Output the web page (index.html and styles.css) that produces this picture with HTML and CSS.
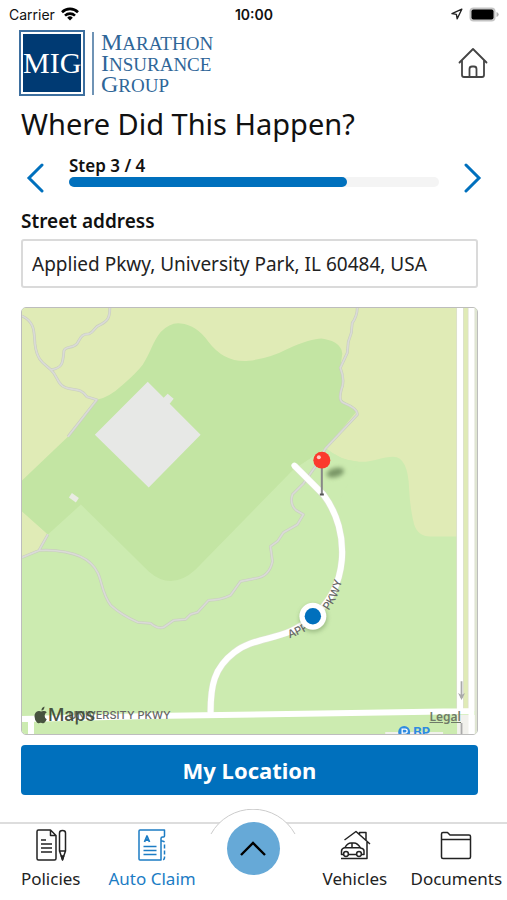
FILE: index.html
```
<!DOCTYPE html>
<html lang="en">
<head>
    <meta charset="UTF-8">
    <meta name="viewport" content="width=device-width, initial-scale=1.0">
    <title>Where Did This Happen?</title>
    <link rel="stylesheet" href="styles.css">
</head>
<body>
    <div class="status-bar">
        <div class="status-left">
            <span>Carrier</span>
            <svg width="18" height="14" viewBox="0 0 18 14" fill="none" stroke="#000" stroke-width="2.6">
                <path d="M1 5.2a11.4 11.4 0 0 1 16 0"/>
                <path d="M4 8.6a7.2 7.2 0 0 1 10 0"/>
                <path d="M9 13.5 6.2 10.7a4 4 0 0 1 5.6 0z" fill="#000" stroke="none"/>
            </svg>
        </div>
        <span class="status-time">10:00</span>
        <div class="status-right">
            <svg width="12" height="12" viewBox="0 0 12 12" fill="none" stroke="#222" stroke-width="1.4" stroke-linejoin="round">
                <path d="M10.8 1.2 1 5.6l4.4.8.8 4.4z"/>
            </svg>
            <svg width="30" height="15" viewBox="0 0 30 15">
                <rect x="0.5" y="0.5" width="26" height="14" rx="4" fill="#c4c4c4"/>
                <rect x="2.5" y="2.5" width="22" height="10" rx="2" fill="#000"/>
                <path d="M27.5 5v5q2.2-.8 2.2-2.5t-2.2-2.5z" fill="#b0b0b0"/>
            </svg>
        </div>
    </div>

    <header class="header">
        <div class="logo">
            <div class="logo-mark"><span>MIG</span></div>
            <div class="logo-name">
                <div>Marathon</div>
                <div>Insurance</div>
                <div>Group</div>
            </div>
        </div>
        <button class="icon-button" aria-label="Home">
            <svg width="30" height="32" viewBox="0 0 30 32" fill="none" stroke="#444" stroke-width="1.8" stroke-linejoin="round" stroke-linecap="round">
                <path d="M1.5 15.5 15 2l13.5 13.5"/>
                <path d="M4 14v14q0 2 2 2h18q2 0 2-2V14"/>
                <path d="M11.5 30v-8q0-2.5 2.5-2.5h2q2.5 0 2.5 2.5v8"/>
            </svg>
        </button>
    </header>

    <main class="main">
        <h1>Where Did This Happen?</h1>

        <div class="stepper">
            <button class="icon-button" aria-label="Previous step">
                <svg width="18" height="30" viewBox="0 0 18 30" fill="none" stroke="#0070bd" stroke-width="3" stroke-linecap="round">
                    <path d="M16 2 3 15l13 13"/>
                </svg>
            </button>
            <div class="step">
                <div class="step-label">Step 3 / 4</div>
                <div class="step-track"><div class="step-fill" style="width: 75%"></div></div>
            </div>
            <button class="icon-button" aria-label="Next step">
                <svg width="18" height="30" viewBox="0 0 18 30" fill="none" stroke="#0070bd" stroke-width="3" stroke-linecap="round">
                    <path d="M2 2l13 13L2 28"/>
                </svg>
            </button>
        </div>

        <label for="address">Street address</label>
        <input type="text" id="address" value="Applied Pkwy, University Park, IL 60484, USA">

        <div class="map">
            <svg class="map-canvas" viewBox="21 308 456 427" preserveAspectRatio="xMidYMid slice">
                <defs>
                    <filter id="blur" x="-50%" y="-50%" width="200%" height="200%"><feGaussianBlur stdDeviation="2.2"/></filter>
                    <path id="applied" d="M289 639C310 632 325 619 333 604Q342 589 346 560"/>
                </defs>

                <!-- land -->
                <rect x="0" y="290" width="520" height="460" fill="#ccebb0"/>
                <path fill="#e0ebb6" d="M0 290H458V537H430Q418 537 414 525Q410 510 409 490Q408 457 393 457C382 457 372 463 358 462Q340 461 325 448L200 480 80 505 22 512 47 535 38 551 22 557H0z"/>
                <path fill="#c3e5a3" d="M21 481 67 437 96 400Q108 398 122 385 135 374 142 365C150 352 153 340 160 332Q170 322 180 323.5 196 325 208 342 224 363 248 361 270 358 287 349 315 337 324 339 341 342 342 354L340 368 343 382 340 399 357 411 325 449 293 470 195 570Q171 592 148 572L80 505 47 535 21 512z"/>
                <path fill="#ccebb0" d="M325 448Q340 461 358 462L340 500 290 500 262 504 293 471z"/>

                <!-- buildings -->
                <path fill="#e7e8e6" d="M147 382 163 398 167 394 173 399 169 404 200 435 148 488 94 435z"/>
                <path fill="#e9ebe3" d="M71 493.5 78 498.5 75 503 68 498z"/>

                <!-- trails -->
                <defs>
                    <g id="trails">
                        <path d="M21 316C34 322 33 332 34 344 36 362 44 364 50 370 57 376 56 385 65 388 74 391 80 388 86 397L96 400 67 437"/>
                        <path d="M109 308C109 318 107 321 99 325 93 327 94 332 88 334 80 334 80 338 76 344 71 349 64 346 63 351 62 363 62 368 50 370"/>
                        <path d="M357 308Q357 316 352 323L351 333 348 342 347 353 340 368Q345 381 341 390 338 401 343 403 358 409 357 415L325 449 315 467 303 484 292 495Q289 505 296 511L303 515 297 525 283 533 277 542 270 547 272 562Q269 577 255 579L240 582 230 596Q220 601 208 601L197 613 190 615 185 620 173 621 163 628Q157 630 150 624L137 623Q121 616 110 606C98 590 103 576 90 564 78 552 52 550 38 551L21 558M38 551 47 535"/>
                    </g>
                </defs>
                <g fill="none" stroke-linejoin="round">
                    <use href="#trails" stroke="#c9cdbf" stroke-width="2.8"/>
                    <use href="#trails" stroke="#dadbd7" stroke-width="1.6"/>
                </g>

                <!-- roads -->
                <g fill="none" stroke="#fff" stroke-width="6">
                    <path fill="#f1f1ec" stroke="none" d="M457 716h20v20h-20zM385 733h58v5h-58z"/>
                    <path fill="#e0ebb6" stroke="none" d="M463 290h6v420h-6z"/>
                    <path stroke="#dcdfcf" stroke-width="7.5" d="M460 290V712M471.5 290V712"/>
                    <path stroke="#dfe5d2" stroke-width="4" d="M477 290V740"/>
                    <path d="M460 290V712M471.5 290V740M0 720.5 150 717 320 714.5 474 712M30 720v20"/>
                    <path stroke="#dde4d0" stroke-width="7" d="M294 466 323 495C352 533 347 592 312 617 288 642 255 636 234 653 213 669 210 687 210 713"/>
                    <path d="M294 466 323 495C352 533 347 592 312 617 288 642 255 636 234 653 213 669 210 687 210 713" stroke-linecap="round"/>
                    <path stroke="#aaa" stroke-width="1.8" d="M461.5 682v17M461.5 724v12"/>
                    <path fill="#aaa" stroke="none" d="M458 694l3.5 2 3.5-2-3.5 7z"/>
                </g>

                <!-- labels -->
                <g class="road-label">
                    <text><textPath href="#applied">APPLIED PKWY</textPath></text>
                    <text x="170" y="720" text-anchor="end">UNIVERSITY PKWY</text>
                </g>
                <text class="poi-label" x="413" y="738">BP</text>
                <circle cx="404" cy="733" r="6" fill="#2f8be0"/>
                <path d="M402 736v-6h3q2 0 2 2t-2 2h-3" fill="none" stroke="#fff" stroke-width="1.3"/>

                <!-- current position -->
                <circle cx="313" cy="619" r="14" fill="#5a7a4a" opacity="0.4" filter="url(#blur)"/>
                <circle cx="312.5" cy="617" r="13.5" fill="#fff"/>
                <circle cx="312.5" cy="617" r="8.2" fill="#0070bd"/>

                <!-- pin -->
                <ellipse cx="335" cy="473" rx="9" ry="4.5" fill="#4f6b40" opacity="0.65" filter="url(#blur)" transform="rotate(-15 335 473)"/>
                <path d="M321.5 468v27" stroke="#888" stroke-width="2"/>
                <path d="M319.5 495h4" stroke="#555" stroke-width="2"/>
                <circle cx="321.5" cy="460.5" r="8.5" fill="#fb3a2d"/>
                <circle cx="318.5" cy="457.5" r="2" fill="#ffc9c3"/>

                <path fill="#47533f" d="M40.5 711.5q-.2-3.2 3-4.200.2 3.4-3 4.200zM45.8 713.2q-1.3-1.5-3.4-1.200-1.300.5-2.100.5-1.300-.6-2.500-.5-4.300.7-4.300 5.300 0 3.900 2.700 6.500 1.100.7 2.300.1 1.300-.6 2.500 0 1.700.8 2.900-.6 1.300-1.500 1.900-3.100-2.100-1-2.100-3.500 0-2.400 2.100-3.500z"/>
                <text class="map-brand" x="47" y="722">Maps</text>
            </svg>
            <a class="map-legal" href="#legal">Legal</a>
        </div>

        <button class="primary">My Location</button>
    </main>

    <nav class="tabs">
        <a class="tab" href="#policies">
            <svg width="32" height="32" viewBox="0 0 32 32" fill="none" stroke="#222" stroke-width="1.5" stroke-linejoin="round">
                <path d="M15.5 1H3.5Q2 1 2 2.5v27Q2 31 3.5 31h16q1.5 0 1.5-1.5V6.5zM15.5 1v5.5H21"/>
                <path d="M6 11h5M6 15h11M6 19h11M6 23h11"/>
                <path d="M24.5 22V4q0-2.5 3-2.5t3 2.5v18l-3 8.5zM24.5 22h6"/>
                <path d="M26.3 27h2.4l-1.2 4z" fill="#222"/>
            </svg>
            <span>Policies</span>
        </a>
        <a class="tab tab-active" href="#claim">
            <svg width="28" height="32" viewBox="0 0 28 32" fill="none" stroke="#1c7cc4" stroke-width="1.5" stroke-linejoin="round">
                <path d="M26.5 1H2Q1 1 1 2v28q0 1 1 1h21V9.5q0-1.5 1.5-1.5h1q1 0 1-1z"/>
                <path d="M23 12q3.5-.5 3.5 2v15q0 2-3.5 2" stroke-dasharray="4 2"/>
                <path d="M5.5 17.5h13M5.5 21.5h13M5.5 25.5h13"/>
                <path d="M6.5 13 9 7l2.5 6M7.5 11h3" stroke-width="1.8"/>
            </svg>
            <span>Auto Claim</span>
        </a>
        <div class="tab-center">
            <svg class="tab-arc" width="86" height="26" viewBox="0 0 86 26">
                <path d="M1 25a48 48 0 0 1 84 0z" fill="#fff"/>
                <path d="M1 25a48 48 0 0 1 84 0" fill="none" stroke="#ccc"/>
            </svg>
            <button class="tab-up" aria-label="More">
                <svg width="28" height="16" viewBox="0 0 28 16" fill="none" stroke="#000" stroke-width="2.4">
                    <path d="M2 14 14 2l12 12"/>
                </svg>
            </button>
        </div>
        <a class="tab" href="#vehicles">
            <svg width="32" height="32" viewBox="0 0 32 32" fill="none" stroke="#222" stroke-width="1.5" stroke-linejoin="round">
                <path d="M5.5 11 17 2.5 31 15M20.5 5V3.5H27v8M28 13v16.500H2"/>
                <path d="M4.5 25.5H2.5V22q0-2.500 3.500-3.500 2.500-4.500 6-4.500h3q3.500 0 6.500 5 3.500.5 3.500 3v3.500h-2M9.500 25.500h8M6 18.800h15.500M13 14v4.800"/>
                <circle cx="7" cy="25" r="2.4"/>
                <circle cx="20" cy="25" r="2.4"/>
            </svg>
            <span>Vehicles</span>
        </a>
        <a class="tab" href="#documents">
            <svg width="32" height="32" viewBox="0 0 32 32" fill="none" stroke="#222" stroke-width="1.5" stroke-linejoin="round">
                <path d="M1.5 28V5q0-1.500 1.500-1.500h4.500L10 6h19q1.500 0 1.500 1.500V28q0 1.500-1.500 1.500H3q-1.500 0-1.500-1.500zM1.500 10.500h29"/>
            </svg>
            <span>Documents</span>
        </a>
    </nav>
</body>
</html>
```
FILE: styles.css
```
* {
    box-sizing: border-box;
}
body {
    font-family: "Noto Sans", sans-serif;
    margin: 0;
    min-height: 100vh;
    display: flex;
    flex-direction: column;
    background-color: #fff;
    color: #111;
}
h1 {
    margin: 0 0 11px;
    font-size: 29px;
    font-weight: 400;
    line-height: 40px;
}
button {
    font-family: inherit;
    border: none;
    cursor: pointer;
}
svg {
    display: block;
}

/* status bar */
.status-bar {
    display: grid;
    grid-template-columns: 1fr auto 1fr;
    align-items: center;
    height: 28px;
    padding: 0 8px 0 9px;
    font-family: Inter, sans-serif;
    font-size: 14px;
}
.status-left, .status-right {
    display: flex;
    align-items: center;
    gap: 6px;
}
.status-right {
    justify-content: flex-end;
}
.status-time {
    font-weight: 600;
}

/* header */
.header {
    display: flex;
    justify-content: space-between;
    align-items: center;
    height: 70px;
    padding: 0 19px;
}
.logo {
    display: flex;
    align-items: center;
    gap: 7px;
    font-family: "Liberation Serif", serif;
}
.logo-mark {
    display: flex;
    align-items: center;
    justify-content: center;
    width: 66px;
    height: 66px;
    border: 2px solid #3d6f9f;
    padding: 2px;
}
.logo-mark span {
    display: block;
    width: 100%;
    background-color: #003a73;
    color: #fff;
    font-size: 30px;
    line-height: 58px;
    text-align: center;
}
.logo-name {
    border-left: 2px solid #6f93b5;
    padding-left: 7px;
    color: #2f6698;
    font-size: 19px;
    line-height: 21px;
    text-transform: uppercase;
}
.logo-name div {
    height: 21px;
}
.logo-name div::first-letter {
    font-size: 24px;
    line-height: 21px;
}
.icon-button {
    padding: 0;
    background: none;
}

/* form */
.main {
    flex: 1;
    display: flex;
    flex-direction: column;
    padding: 6px 29px 27px 21px;
}
.stepper {
    display: flex;
    align-items: flex-end;
    gap: 25px;
    margin: 0 -4px 14px 5px;
}
.step {
    flex: 1;
    padding-bottom: 6px;
}
.step-label {
    font-size: 17px;
    font-weight: 600;
    line-height: 22px;
}
.step-track {
    height: 10px;
    border-radius: 5px;
    background-color: #f4f4f4;
}
.step-fill {
    height: 10px;
    border-radius: 5px;
    background-color: #0070bd;
}
label {
    margin-bottom: 4px;
    font-size: 19px;
    font-weight: 600;
    line-height: 28px;
}
input {
    width: 100%;
    height: 49px;
    padding: 0 9px;
    border: 2px solid #dadada;
    border-radius: 3px;
    font-family: inherit;
    font-size: 19px;
    color: #222;
}

/* map */
.map {
    position: relative;
    flex: 1 1 300px;
    display: flex;
    margin: 19px 0 10px;
    border: 1px solid #bdbdbd;
    border-radius: 5px;
    overflow: hidden;
}
.map-canvas {
    flex: 1;
    width: 100%;
    height: 100%;
}
.road-label {
    font-family: Inter, sans-serif;
    font-size: 11px;
    font-weight: 500;
    fill: #666;
}
.poi-label {
    font-family: Inter, sans-serif;
    font-size: 13px;
    font-weight: 700;
    fill: #2f8be0;
}
.map-brand {
    font-family: Inter, sans-serif;
    font-size: 18px;
    font-weight: 500;
    fill: #47533f;
}
.map-legal {
    position: absolute;
    right: 16px;
    bottom: 10px;
    color: #6f7a68;
    font-size: 12px;
    font-weight: 600;
    line-height: 14px;
}
.primary {
    height: 50px;
    border-radius: 4px;
    background-color: #0070bd;
    color: #fff;
    font-size: 22px;
    font-weight: 700;
}

/* bottom tabs */
.tabs {
    display: grid;
    grid-template-columns: repeat(5, 1fr);
    height: 78px;
    border-top: 2px solid #ddd;
}
.tab {
    display: flex;
    flex-direction: column;
    align-items: center;
    gap: 5px;
    padding-top: 5px;
    color: #222;
    font-size: 17px;
    line-height: 26px;
    text-decoration: none;
}
.tab-active {
    color: #1c7cc4;
}
.tab-center {
    position: relative;
    display: flex;
    justify-content: center;
    align-items: flex-start;
}
.tab-arc {
    position: absolute;
    top: -15px;
}
.tab-up {
    position: absolute;
    top: -2px;
    display: flex;
    align-items: center;
    justify-content: center;
    width: 53px;
    height: 53px;
    padding: 0;
    border-radius: 50%;
    background-color: #66a9d7;
}
```
